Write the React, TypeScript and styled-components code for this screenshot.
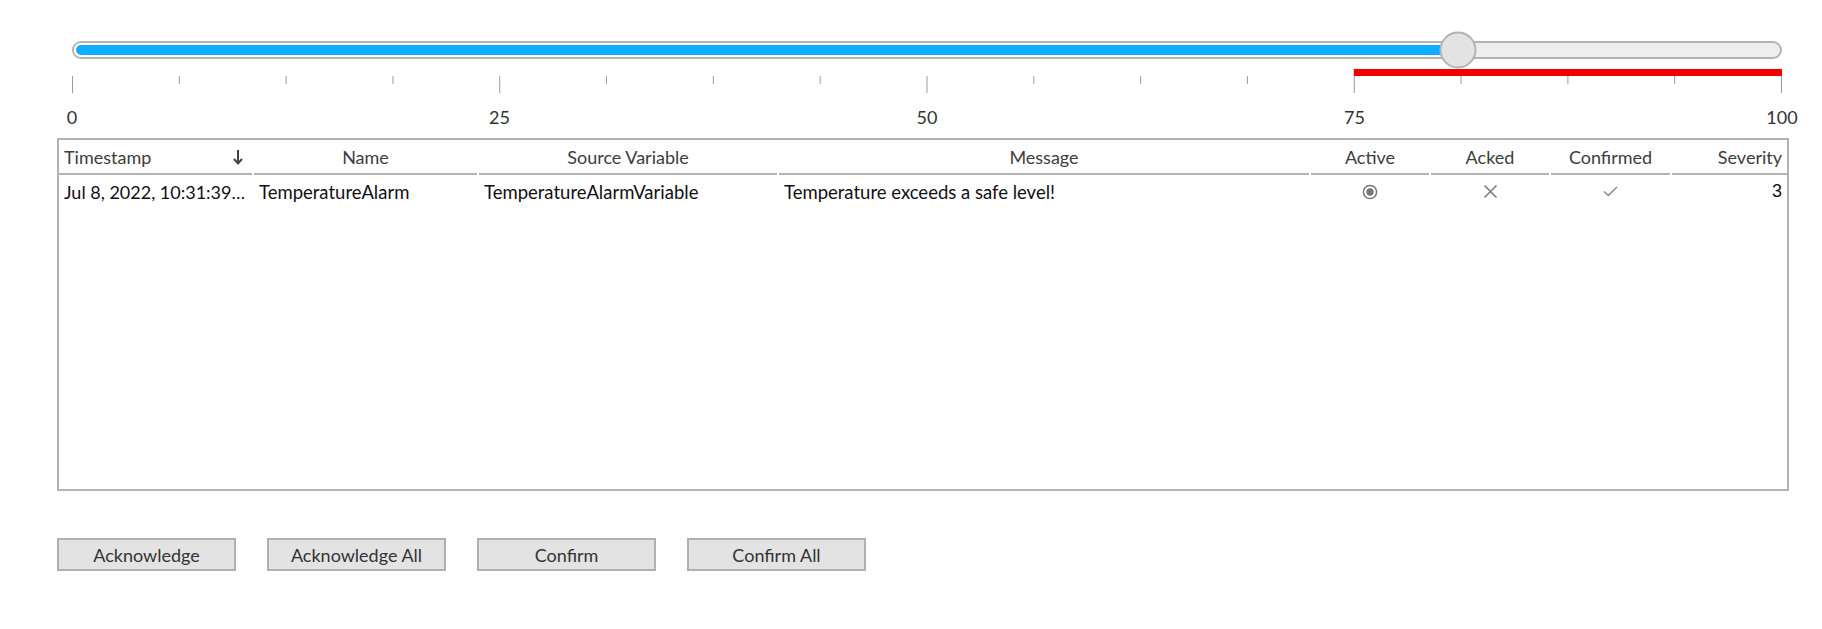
import React from 'react';
import styled, { createGlobalStyle } from 'styled-components';

type Align = 'left' | 'center' | 'right';

type Alarm = {
  timestamp: string;
  name: string;
  source: string;
  message: string;
  active: boolean;
  acked: boolean;
  confirmed: boolean;
  severity: number;
};

const GlobalStyle = createGlobalStyle`
  body {
    margin: 0;
    background: #ffffff;
    font-family: Lato, "Open Sans", sans-serif;
  }
`;

const COLUMNS = '193px 223px 298px 530px 118px 118px 119px 1fr';
const SLIDER_VALUE = 81.1;
const RANGE_START = 75;
const SCALE_WIDTH = 1710;
const TICK_COUNT = 16;

const Page = styled.div`
  width: 1732px;
  padding: 41px 0 0 57px;
`;

const SliderBlock = styled.div`
  width: ${SCALE_WIDTH}px;
  margin-left: 15px;
`;

const Track = styled.div`
  position: relative;
  height: 18px;
  box-sizing: border-box;
  border: 2px solid #b3b3b3;
  border-radius: 9px;
  background: #eeeeee;
`;

const Fill = styled.div`
  position: absolute;
  left: 0;
  top: 0;
  bottom: 0;
  box-sizing: border-box;
  border: 2px solid #ffffff;
  border-radius: 7px;
  background: #0daeff;
`;

const Thumb = styled.div`
  position: absolute;
  top: 50%;
  width: 37px;
  height: 37px;
  box-sizing: border-box;
  border: 2px solid #b3b3b3;
  border-radius: 50%;
  background: #e3e3e3;
  transform: translate(-50%, -50%);
`;

const Scale = styled.svg`
  display: block;
  margin-top: 10px;
`;

const LabelRow = styled.div`
  display: flex;
  justify-content: space-between;
  margin-top: 14px;
  height: 20px;
`;

const Label = styled.span`
  width: 0;
  display: flex;
  justify-content: center;
  white-space: nowrap;
  font-size: 18px;
  line-height: 20px;
  color: #333333;
`;

const Table = styled.div`
  margin-top: 11px;
  height: 353px;
  box-sizing: border-box;
  border: 2px solid #b3b3b3;
`;

const Row = styled.div`
  display: grid;
  grid-template-columns: ${COLUMNS};
  column-gap: 2px;
`;

const HeadCell = styled.div<{ $align: Align }>`
  display: flex;
  align-items: center;
  justify-content: ${(p) =>
    p.$align === 'left' ? 'space-between' : p.$align === 'right' ? 'flex-end' : 'center'};
  height: 33px;
  padding: 0 ${(p) => (p.$align === 'left' ? '9px' : '5px')} 0 5px;
  border-bottom: 2px solid #b3b3b3;
  font-size: 18px;
  color: #3d3d3d;
  white-space: nowrap;
`;

const Cell = styled.div<{ $align: Align; $numeric?: boolean }>`
  display: flex;
  align-items: center;
  justify-content: ${(p) =>
    p.$align === 'left' ? 'flex-start' : p.$align === 'right' ? 'flex-end' : 'center'};
  height: 33px;
  padding: 0 5px;
  min-width: 0;
  white-space: nowrap;
  font-family: ${(p) => (p.$numeric ? '"Liberation Sans", Arial, sans-serif' : 'inherit')};
  font-size: ${(p) => (p.$numeric ? '18px' : '18.5px')};
  color: #111111;
`;

const Stamp = styled.span`
  font-size: 18px;
`;

const ButtonBar = styled.div`
  display: flex;
  gap: 31px;
  margin-top: 47px;
`;

const Button = styled.button`
  width: 179px;
  height: 33px;
  border: 2px solid #b0b0b0;
  border-radius: 0;
  background: #e3e3e3;
  font-family: Lato, sans-serif;
  font-size: 18px;
  color: #333333;
  cursor: pointer;

  &:hover {
    background: #d8d8d8;
  }
`;

const SortArrow = () => (
  <svg width="10" height="16" viewBox="0 0 10 16">
    <path d="M5 1v13M1 10l4 4.5L9 10" fill="none" stroke="#444" strokeWidth="2" />
  </svg>
);

const ActiveIcon = () => (
  <svg width="16" height="16" viewBox="0 0 16 16">
    <circle cx="8" cy="8" r="6.6" fill="none" stroke="#777" strokeWidth="1.5" />
    <circle cx="8" cy="8" r="3.7" fill="#777" />
  </svg>
);

const CrossIcon = () => (
  <svg width="15" height="15" viewBox="0 0 15 15">
    <path d="M1.5 1.5l12 12M13.5 1.5l-12 12" stroke="#777" strokeWidth="1.5" />
  </svg>
);

const CheckIcon = () => (
  <svg width="15" height="11" viewBox="0 0 15 11">
    <path d="M1 5.5l4.3 4L14 1" fill="none" stroke="#888" strokeWidth="1.5" />
  </svg>
);

const ScaleTicks = () => {
  const step = (SCALE_WIDTH - 1) / TICK_COUNT;
  const ticks = Array.from({ length: TICK_COUNT + 1 }, (_, i) => i);
  return (
    <Scale width={SCALE_WIDTH} height={24} viewBox={`0 0 ${SCALE_WIDTH} 24`}>
      <rect
        x={(RANGE_START / 100) * (SCALE_WIDTH - 1)}
        y={0}
        width={(1 - RANGE_START / 100) * (SCALE_WIDTH - 1) + 1}
        height={7}
        fill="#f00000"
      />
      {ticks.map((i) => (
        <line
          key={i}
          x1={i * step + 0.5}
          x2={i * step + 0.5}
          y1={7}
          y2={i % 4 === 0 ? 24 : 15}
          stroke="#9a9a9a"
          strokeWidth={1}
        />
      ))}
    </Scale>
  );
};

const alarms: Alarm[] = [
  {
    timestamp: 'Jul 8, 2022, 10:31:39…',
    name: 'TemperatureAlarm',
    source: 'TemperatureAlarmVariable',
    message: 'Temperature exceeds a safe level!',
    active: true,
    acked: false,
    confirmed: true,
    severity: 3,
  },
];

const headers: { title: string; align: Align }[] = [
  { title: 'Timestamp', align: 'left' },
  { title: 'Name', align: 'center' },
  { title: 'Source Variable', align: 'center' },
  { title: 'Message', align: 'center' },
  { title: 'Active', align: 'center' },
  { title: 'Acked', align: 'center' },
  { title: 'Confirmed', align: 'center' },
  { title: 'Severity', align: 'right' },
];

export default function App() {
  return (
    <Page>
      <GlobalStyle />
      <SliderBlock>
        <Track>
          <Fill style={{ width: `calc(${SLIDER_VALUE}% + 2px)` }} />
          <Thumb style={{ left: `${SLIDER_VALUE}%` }} />
        </Track>
        <ScaleTicks />
        <LabelRow>
          {[0, 25, 50, 75, 100].map((v) => (
            <Label key={v}>{v}</Label>
          ))}
        </LabelRow>
      </SliderBlock>

      <Table>
        <Row>
          {headers.map((h) => (
            <HeadCell key={h.title} $align={h.align}>
              {h.title}
              {h.title === 'Timestamp' && <SortArrow />}
            </HeadCell>
          ))}
        </Row>
        {alarms.map((a) => (
          <Row key={a.timestamp}>
            <Cell $align="left">
              <Stamp>{a.timestamp}</Stamp>
            </Cell>
            <Cell $align="left">{a.name}</Cell>
            <Cell $align="left">{a.source}</Cell>
            <Cell $align="left">{a.message}</Cell>
            <Cell $align="center">{a.active && <ActiveIcon />}</Cell>
            <Cell $align="center">{a.acked ? <CheckIcon /> : <CrossIcon />}</Cell>
            <Cell $align="center">{a.confirmed ? <CheckIcon /> : <CrossIcon />}</Cell>
            <Cell $align="right" $numeric>
              {a.severity}
            </Cell>
          </Row>
        ))}
      </Table>

      <ButtonBar>
        <Button>Acknowledge</Button>
        <Button>Acknowledge All</Button>
        <Button>Confirm</Button>
        <Button>Confirm All</Button>
      </ButtonBar>
    </Page>
  );
}
